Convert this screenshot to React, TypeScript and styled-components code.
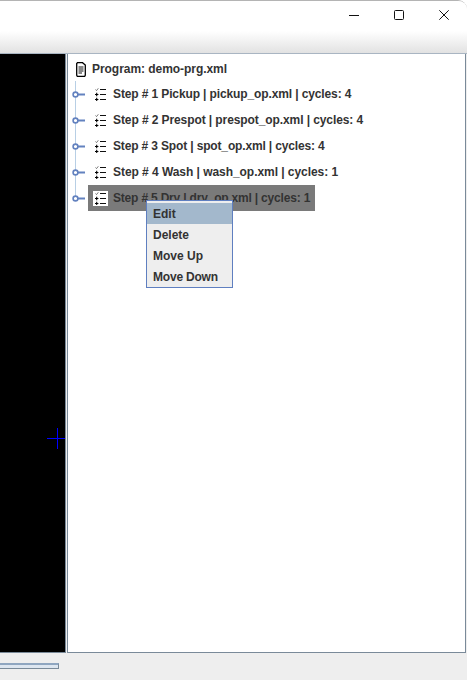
import React from "react"
import styled, { createGlobalStyle } from "styled-components"

const GlobalStyle = createGlobalStyle`
  html, body {
    margin: 0;
    padding: 0;
    background: #fff;
    overflow: hidden;
  }
  * { box-sizing: border-box; }
`

const Frame = styled.div`
  width: 467px;
  height: 680px;
  display: flex;
  flex-direction: column;
  background: #eeeeee;
  font-family: "Liberation Sans", Arial, sans-serif;
  border-top: 1px solid #b4b4b4;
  border-top-right-radius: 9px;
  overflow: hidden;
`

const TitleBar = styled.div`
  height: 53px;
  flex: none;
  display: flex;
  justify-content: flex-end;
  align-items: flex-start;
  padding-right: 1px;
  background: linear-gradient(#ffffff 0, #ffffff 30px, #e2e2e2 52px);
  border-bottom: 1px solid #a9b5c2;
`

const WinButton = styled.button`
  width: 45px;
  height: 28px;
  padding: 0;
  border: 0;
  background: none;
  display: flex;
  align-items: center;
  justify-content: center;
  svg { display: block; }
`

const Body = styled.div`
  flex: 1;
  min-height: 0;
  display: flex;
  padding-right: 1px;
`

const BlackPane = styled.div`
  width: 66px;
  flex: none;
  position: relative;
  background: #000;
  border-right: 1px solid #7a8a99;
  border-bottom: 1px solid #7a8a99;
`

const CrossH = styled.div`
  position: absolute;
  left: 47px;
  top: 384px;
  width: 18px;
  height: 1px;
  background: #0000ff;
`

const CrossV = styled.div`
  position: absolute;
  left: 57px;
  top: 374px;
  width: 1px;
  height: 21px;
  background: #0000ff;
`

const Divider = styled.div`
  width: 2px;
  flex: none;
  background: #eeeeee;
  border-right: 1px solid #7a8a99;
`

const TreePane = styled.div`
  flex: 1;
  min-width: 0;
  position: relative;
  background: #fff;
  border-right: 1px solid #7a8a99;
  border-bottom: 1px solid #7a8a99;
  padding: 3px 0 0 7px;
`

const RootRow = styled.div`
  height: 24px;
  display: flex;
  align-items: center;
  gap: 6px;
  padding-left: 1px;
`

const Label = styled.span<{ $track?: number }>`
  font-size: 12px;
  font-weight: 700;
  color: #333333;
  white-space: nowrap;
  letter-spacing: ${(p) => p.$track ?? 0}px;
`

const Steps = styled.div`
  display: flex;
  flex-direction: column;
`

const StepRow = styled.div<{ $last?: boolean }>`
  height: 26px;
  display: flex;
  align-items: center;
  position: relative;
  padding-left: 13px;

  /* tree line */
  &::before {
    content: "";
    position: absolute;
    left: 0;
    top: 0;
    width: 1px;
    height: ${(p) => (p.$last ? "13px" : "26px")};
    background: #b8cfe5;
  }
`

const Handle = styled.svg`
  position: absolute;
  left: -3px;
  top: 10px;
`

const StepBody = styled.div<{ $selected?: boolean }>`
  height: 26px;
  display: flex;
  align-items: center;
  gap: 5px;
  padding: 0 5px;
  background: ${(p) => (p.$selected ? "#7a7a7a" : "transparent")};
`

const IconBox = styled.span<{ $selected?: boolean }>`
  width: 15px;
  height: 15px;
  display: flex;
  align-items: center;
  justify-content: center;
  flex: none;
  background: ${(p) => (p.$selected ? "#fff" : "transparent")};
`

const Menu = styled.div`
  position: absolute;
  left: 78px;
  top: 146px;
  width: 87px;
  padding: 2px 0 0;
  background: #eeeeee;
  border: 1px solid #5f7fc0;
  display: flex;
  flex-direction: column;
`

const MenuItem = styled.div<{ $active?: boolean }>`
  height: 21px;
  padding-left: 6px;
  display: flex;
  align-items: center;
  background: ${(p) => (p.$active ? "#a3b8cc" : "transparent")};
`

const StatusBar = styled.div`
  height: 27px;
  flex: none;
  padding-top: 10px;
`

const Progress = styled.div`
  width: 59px;
  height: 6px;
  background: #dde6f0;
  border: 1px solid #7a8a99;
  border-left: 0;
  border-top: 2px solid #8fa6c0;
`

const ProgramIcon = () => (
  <svg width="10" height="15" viewBox="0 0 10 15" fill="none">
    <path d="M1.5.7h5l2.8 2.4v10a1.2 1.2 0 0 1-1.2 1.2H1.9A1.2 1.2 0 0 1 .7 13.1V1.5z" stroke="#000" strokeWidth="1.3" />
    <path d="M2.5 5h5M2.5 7h5M2.5 9h5M2.5 11h3.5" stroke="#111" strokeWidth="1" />
  </svg>
)

const StepIcon = () => (
  <svg width="11" height="13" viewBox="0 0 11 13" fill="none">
    <path d="M.5 1.5 1.5 2.6 3.3.3" stroke="#555" strokeWidth="0.8" />
    <path d="M5 1.5h6M5 6.5h6M5 11.5h6" stroke="#111" strokeWidth="1" />
    <path d="M0 6.5h3.4M1.7 4.8v3.4M0 11.5h3.4M1.7 9.8v3.2" stroke="#000" strokeWidth="1.1" />
  </svg>
)

const NodeHandle = () => (
  <Handle width="13" height="7" viewBox="0 0 13 7" fill="none">
    <circle cx="3.5" cy="3.5" r="2.4" fill="#fff" stroke="#6382bf" strokeWidth="1.6" />
    <path d="M6 3.5h7" stroke="#6382bf" strokeWidth="1.8" />
  </Handle>
)

const steps = [
  { text: "Step # 1 Pickup | pickup_op.xml | cycles: 4", track: -0.12 },
  { text: "Step # 2 Prespot | prespot_op.xml | cycles: 4", track: -0.09 },
  { text: "Step # 3 Spot | spot_op.xml | cycles: 4", track: -0.15 },
  { text: "Step # 4 Wash | wash_op.xml | cycles: 1", track: -0.05 },
  { text: "Step # 5 Dry | dry_op.xml | cycles: 1", track: -0.19 },
]

const menuItems = [
  { text: "Edit", track: 0 },
  { text: "Delete", track: 0 },
  { text: "Move Up", track: 0 },
  { text: "Move Down", track: -0.2 },
]

const App = () => (
  <Frame>
    <GlobalStyle />
    <TitleBar>
      <WinButton>
        <svg width="10" height="10" viewBox="0 0 10 10"><path d="M0 5.5h10" stroke="#111" /></svg>
      </WinButton>
      <WinButton>
        <svg width="10" height="10" viewBox="0 0 10 10" fill="none"><rect x=".5" y=".5" width="9" height="9" rx="1" stroke="#111" /></svg>
      </WinButton>
      <WinButton>
        <svg width="10" height="10" viewBox="0 0 10 10" fill="none"><path d="M.3.3l9.4 9.4M9.7.3.3 9.7" stroke="#111" /></svg>
      </WinButton>
    </TitleBar>
    <Body>
      <BlackPane>
        <CrossH />
        <CrossV />
      </BlackPane>
      <Divider />
      <TreePane>
        <RootRow>
          <ProgramIcon />
          <Label $track={-0.05}>Program: demo-prg.xml</Label>
        </RootRow>
        <Steps>
          {steps.map((s, i) => {
            const selected = i === steps.length - 1
            return (
              <StepRow key={s.text} $last={selected}>
                <NodeHandle />
                <StepBody $selected={selected}>
                  <IconBox $selected={selected}><StepIcon /></IconBox>
                  <Label $track={s.track}>{s.text}</Label>
                </StepBody>
              </StepRow>
            )
          })}
        </Steps>
        <Menu>
          {menuItems.map((m, i) => (
            <MenuItem key={m.text} $active={i === 0}><Label $track={m.track}>{m.text}</Label></MenuItem>
          ))}
        </Menu>
      </TreePane>
    </Body>
    <StatusBar>
      <Progress />
    </StatusBar>
  </Frame>
)

export default App
